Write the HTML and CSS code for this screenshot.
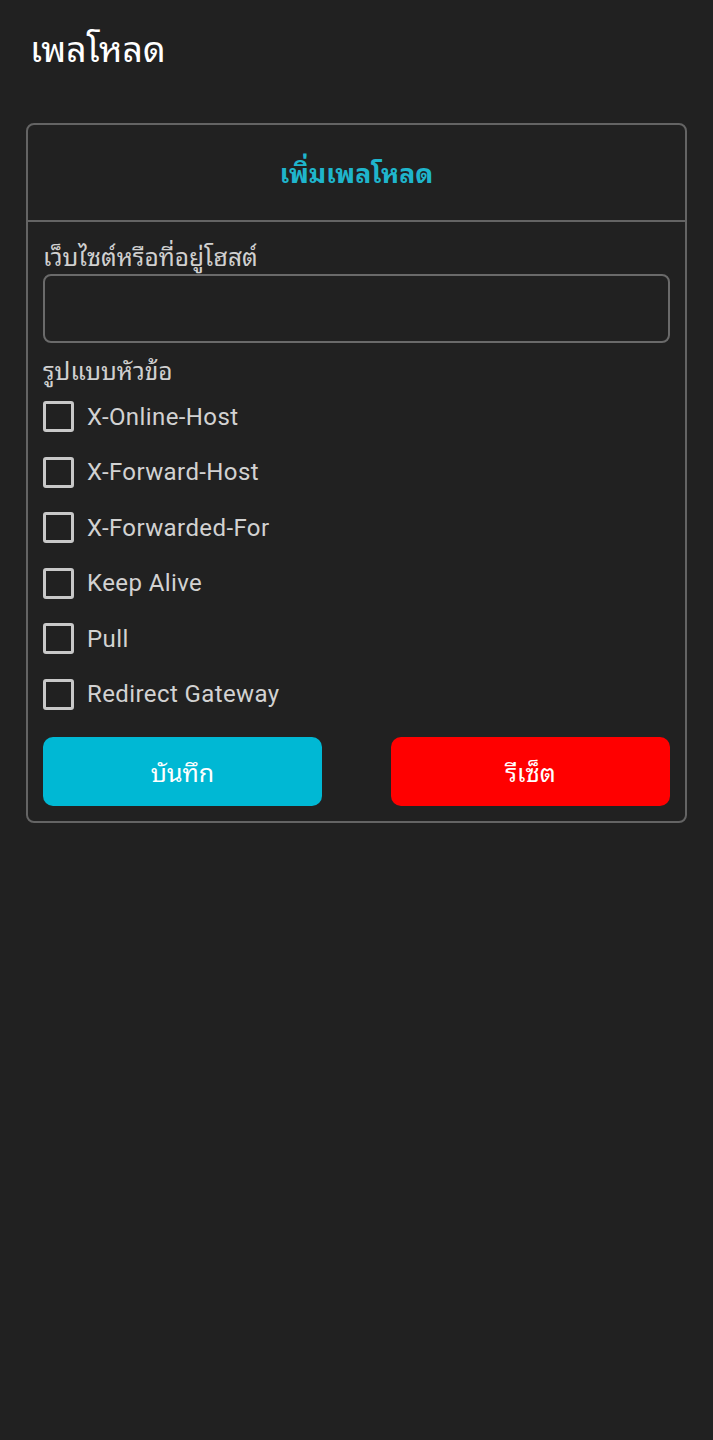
FILE: index.html
```html
<!DOCTYPE html>
<html lang="th">
<head>
<meta charset="utf-8">
<title>เพลโหลด</title>
<link rel="stylesheet" href="styles.css">
</head>
<body>
<header class="appbar">เพลโหลด</header>
<main class="card">
  <div class="card-head">เพิ่มเพลโหลด</div>
  <div class="card-body">
    <label class="field-label">เว็บไซต์หรือที่อยู่โฮสต์</label>
    <div class="input"></div>
    <div class="field-label second">รูปแบบหัวข้อ</div>
    <ul class="checks">
      <li><span class="box"></span>X-Online-Host</li>
      <li><span class="box"></span>X-Forward-Host</li>
      <li><span class="box"></span>X-Forwarded-For</li>
      <li><span class="box"></span>Keep Alive</li>
      <li><span class="box"></span>Pull</li>
      <li><span class="box"></span>Redirect Gateway</li>
    </ul>
    <div class="actions">
      <button class="btn save">บันทึก</button>
      <button class="btn reset">รีเซ็ต</button>
    </div>
  </div>
</main>
</body>
</html>
```
FILE: styles.css
```css
html, body {
  margin: 0;
  padding: 0;
  background: #212121;
}
body {
  font-family: Roboto, "Noto Sans Thai Looped", "Noto Sans", sans-serif;
  color: #d2d2d2;
  min-height: 1440px;
}
.appbar {
  height: 86px;
  padding: 29px 0 0 30px;
  box-sizing: border-box;
  font-size: 35.5px;
  line-height: 42px;
  color: #ffffff;
}
.card {
  margin: 37px 26px 0 26px;
  border: 2px solid #646464;
  border-radius: 8px;
  height: 700px;
  box-sizing: border-box;
}
.card-head {
  height: 97px;
  padding-bottom: 3px;
  box-sizing: border-box;
  border-bottom: 2px solid #646464;
  display: flex;
  align-items: center;
  justify-content: center;
  color: #1fb5cc;
  font-size: 26.5px;
  font-weight: bold;
}
.card-body {
  padding: 19px 15px 0 15px;
}
.field-label {
  display: block;
  font-size: 24.5px;
  line-height: 33px;
  color: #d0d0d0;
}
.field-label.second {
  margin-top: 12px;
  margin-bottom: 1px;
}
.input {
  height: 69px;
  box-sizing: border-box;
  border: 2px solid #6a6a6a;
  border-radius: 8px;
}
.checks {
  list-style: none;
  margin: 0;
  padding: 0;
}
.checks li {
  height: 55.5px;
  display: flex;
  align-items: center;
  font-size: 24px;
  letter-spacing: 0.4px;
  color: #d2d2d2;
}
.box {
  width: 31px;
  height: 31px;
  box-sizing: border-box;
  border: 3px solid #c8c8c8;
  border-radius: 3px;
  margin-right: 13px;
}
.actions {
  display: flex;
  justify-content: space-between;
  margin-top: 15px;
}
.btn {
  width: 279px;
  height: 69px;
  border: none;
  border-radius: 10px;
  color: #ffffff;
  font-family: inherit;
  font-size: 25px;
  padding-bottom: 3px;
}
.save { background: #00b8d4; }
.reset { background: #ff0000; }
```
